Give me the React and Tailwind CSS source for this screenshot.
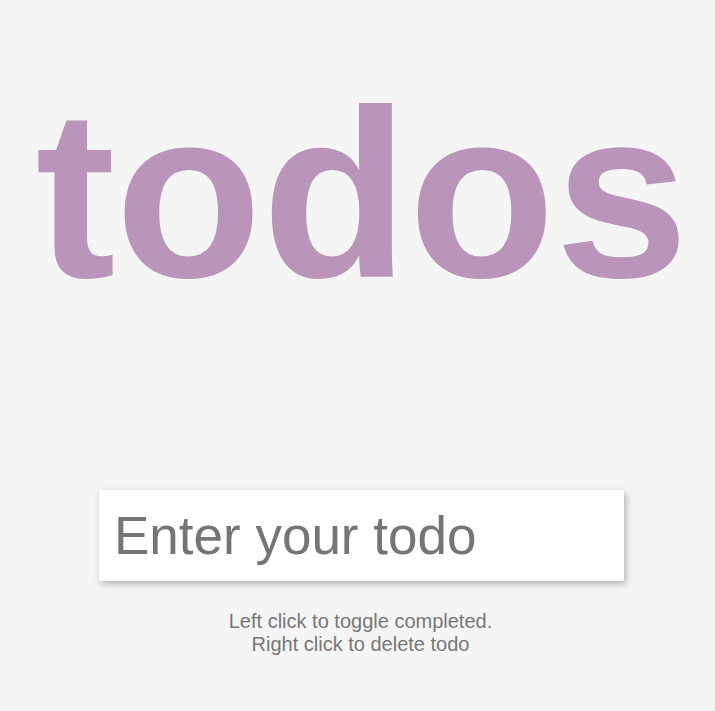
import React from "react";

export default function App() {
  return (
    <div className="min-h-[711px] w-full bg-[#f5f5f5] flex flex-col items-center font-['Liberation_Sans',Arial,sans-serif]">
      <h1 className="mt-[74px] ml-[9px] text-[240px] leading-[240px] font-bold text-[#b995b9] select-none">
        todos
      </h1>

      {/* input card sits slightly right of center */}
      <div className="mt-[176px] w-full flex justify-center pl-[8px]">
        <input
          type="text"
          placeholder="Enter your todo"
          className="w-[525px] h-[91px] bg-white pl-[15px] pr-3 text-[53px] text-[#555] placeholder:text-[#757575] outline-none shadow-[2px_3px_7px_rgba(0,0,0,0.28)]"
        />
      </div>

      <p className="mt-[29px] ml-[6px] text-[20px] leading-[23px] text-[#777] text-center">
        Left click to toggle completed.
        <br />
        Right click to delete todo
      </p>
    </div>
  );
}
